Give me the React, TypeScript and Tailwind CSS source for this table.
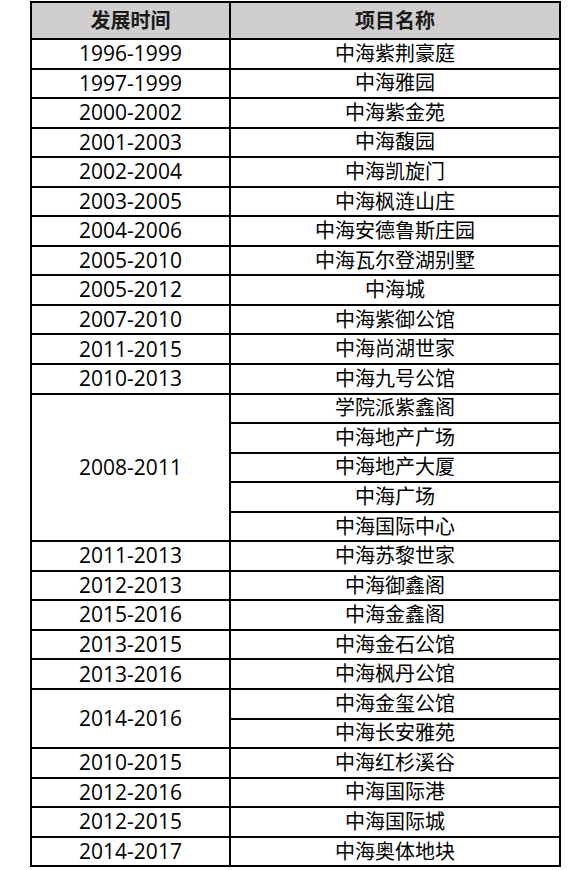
import React from 'react';

type Group = { years: string; names: string[] };

const groups: Group[] = [
  { years: '1996-1999', names: ['中海紫荆豪庭'] },
  { years: '1997-1999', names: ['中海雅园'] },
  { years: '2000-2002', names: ['中海紫金苑'] },
  { years: '2001-2003', names: ['中海馥园'] },
  { years: '2002-2004', names: ['中海凯旋门'] },
  { years: '2003-2005', names: ['中海枫涟山庄'] },
  { years: '2004-2006', names: ['中海安德鲁斯庄园'] },
  { years: '2005-2010', names: ['中海瓦尔登湖别墅'] },
  { years: '2005-2012', names: ['中海城'] },
  { years: '2007-2010', names: ['中海紫御公馆'] },
  { years: '2011-2015', names: ['中海尚湖世家'] },
  { years: '2010-2013', names: ['中海九号公馆'] },
  { years: '2008-2011', names: ['学院派紫鑫阁', '中海地产广场', '中海地产大厦', '中海广场', '中海国际中心'] },
  { years: '2011-2013', names: ['中海苏黎世家'] },
  { years: '2012-2013', names: ['中海御鑫阁'] },
  { years: '2015-2016', names: ['中海金鑫阁'] },
  { years: '2013-2015', names: ['中海金石公馆'] },
  { years: '2013-2016', names: ['中海枫丹公馆'] },
  { years: '2014-2016', names: ['中海金玺公馆', '中海长安雅苑'] },
  { years: '2010-2015', names: ['中海红杉溪谷'] },
  { years: '2012-2016', names: ['中海国际港'] },
  { years: '2012-2015', names: ['中海国际城'] },
  { years: '2014-2017', names: ['中海奥体地块'] },
];

const cell = 'flex items-center justify-center border-r-2 border-b-2 border-black';

export default function App() {
  return (
    <div className="w-[580px] h-[870px] bg-white pt-px pl-[30px] text-black font-['Open_Sans','Noto_Sans_CJK_SC',sans-serif]">
      <div className="grid grid-cols-[199px_330px] grid-rows-[37px_repeat(28,29.55px)] w-fit border-l-2 border-t-2 border-black">
        <div className={`${cell} bg-[#d0cece] font-bold text-[20px] text-[#1a1a1a]`}>发展时间</div>
        <div className={`${cell} bg-[#d0cece] font-bold text-[20px] text-[#1a1a1a]`}>项目名称</div>
        {groups.map((g) => (
          <React.Fragment key={g.years + g.names[0]}>
            {/* merged year cell spans all its projects */}
            <div className={`${cell} text-[21px]`} style={{ gridRow: `span ${g.names.length}` }}>
              {g.years}
            </div>
            {g.names.map((n) => (
              <div key={n} className={`${cell} text-[20px] col-start-2`}>
                {n}
              </div>
            ))}
          </React.Fragment>
        ))}
      </div>
    </div>
  );
}
